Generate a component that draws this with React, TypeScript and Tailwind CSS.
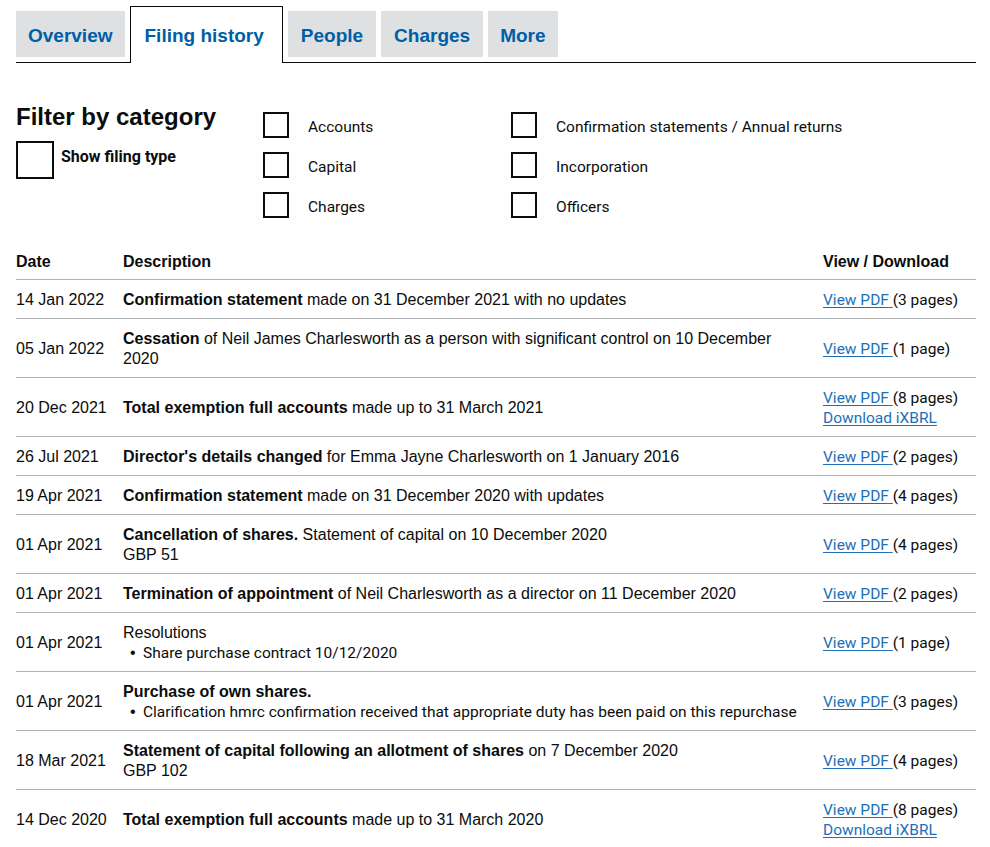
import React from "react";

const ARIAL = { fontFamily: '"Liberation Sans", Arial, sans-serif' };
const GDS = { fontFamily: 'Roboto, "Liberation Sans", sans-serif' };

type Row = {
  date: string;
  desc: React.ReactNode;
  pages: string;
  ixbrl?: boolean;
};

const Bullet = ({ children }: { children: React.ReactNode }) => (
  <div className="flex whitespace-nowrap text-[15.5px] leading-5" style={GDS}>
    <span className="w-5 pl-[7px] text-[16px]" style={ARIAL}>
      •
    </span>
    <span>{children}</span>
  </div>
);

const rows: Row[] = [
  {
    date: "14 Jan 2022",
    desc: (
      <>
        <b>Confirmation statement</b> made on 31 December 2021 with no updates
      </>
    ),
    pages: "(3 pages)",
  },
  {
    date: "05 Jan 2022",
    desc: (
      <>
        <b>Cessation</b> of Neil James Charlesworth as a person with significant control on 10 December
        <br />
        2020
      </>
    ),
    pages: "(1 page)",
  },
  {
    date: "20 Dec 2021",
    desc: (
      <>
        <b>Total exemption full accounts</b> made up to 31 March 2021
      </>
    ),
    pages: "(8 pages)",
    ixbrl: true,
  },
  {
    date: "26 Jul 2021",
    desc: (
      <>
        <b>Director's details changed</b> for Emma Jayne Charlesworth on 1 January 2016
      </>
    ),
    pages: "(2 pages)",
  },
  {
    date: "19 Apr 2021",
    desc: (
      <>
        <b>Confirmation statement</b> made on 31 December 2020 with updates
      </>
    ),
    pages: "(4 pages)",
  },
  {
    date: "01 Apr 2021",
    desc: (
      <>
        <b>Cancellation of shares.</b> Statement of capital on 10 December 2020
        <br />
        GBP 51
      </>
    ),
    pages: "(4 pages)",
  },
  {
    date: "01 Apr 2021",
    desc: (
      <>
        <b>Termination of appointment</b> of Neil Charlesworth as a director on 11 December 2020
      </>
    ),
    pages: "(2 pages)",
  },
  {
    date: "01 Apr 2021",
    desc: (
      <>
        <div>Resolutions</div>
        <Bullet>Share purchase contract 10/12/2020</Bullet>
      </>
    ),
    pages: "(1 page)",
  },
  {
    date: "01 Apr 2021",
    desc: (
      <>
        <div>
          <b>Purchase of own shares.</b>
        </div>
        <Bullet>
          Clarification hmrc confirmation received that appropriate duty has been paid on this repurchase
        </Bullet>
      </>
    ),
    pages: "(3 pages)",
  },
  {
    date: "18 Mar 2021",
    desc: (
      <>
        <b>Statement of capital following an allotment of shares</b> on 7 December 2020
        <br />
        GBP 102
      </>
    ),
    pages: "(4 pages)",
  },
  {
    date: "14 Dec 2020",
    desc: (
      <>
        <b>Total exemption full accounts</b> made up to 31 March 2020
      </>
    ),
    pages: "(8 pages)",
    ixbrl: true,
  },
];

const tabs = [
  { t: "Overview", pad: "px-3" },
  { t: "Filing history", pad: "" },
  { t: "People", pad: "px-[13px]" },
  { t: "Charges", pad: "px-[13px]" },
  { t: "More", pad: "px-3" },
];

const Box = ({ big }: { big?: boolean }) => (
  <div
    className={
      big
        ? "w-[38px] h-[38px] border-2 border-[#0b0c0c] bg-white shrink-0"
        : "w-[26px] h-[26px] border-2 border-[#0b0c0c] bg-white shrink-0"
    }
  />
);

const categories = [
  ["Accounts", "Confirmation statements / Annual returns"],
  ["Capital", "Incorporation"],
  ["Charges", "Officers"],
];

export default function App() {
  return (
    <div className="bg-white min-h-[847px] text-[#0b0c0c]" style={ARIAL}>
      <div className="ml-4 w-[960px]">
        {/* Tabs */}
        <div className="flex items-end gap-[5px] border-b border-[#0b0c0c] h-[63px]">
          {tabs.map(({ t, pad }) =>
            t === "Filing history" ? (
              <div
                key={t}
                className="h-[57px] -mb-px bg-white border border-b-0 border-[#0b0c0c] pl-[14px] pr-[18px] pt-[19px] text-[19px] leading-5 font-bold text-[#005ea5]"
              >
                {t}
              </div>
            ) : (
              <div
                key={t}
                className={`h-[46px] mb-[5px] bg-[#dee0e2] ${pad} pt-[15px] text-[19px] leading-5 font-bold text-[#005ea5]`}
              >
                {t}
              </div>
            )
          )}
        </div>

        {/* Filter */}
        <div className="flex mt-[39px]">
          <div className="w-[247px]">
            <h2 className="text-[24px] leading-[30px] font-bold">Filter by category</h2>
            <div className="flex mt-[9px] gap-[7px]">
              <Box big />
              <span className="text-[16px] leading-5 font-bold pt-[6px]" style={GDS}>
                Show filing type
              </span>
            </div>
          </div>
          <div className="pt-[10px] flex flex-col gap-[14px]">
            {categories.map((pair, i) => (
              <div key={i} className="flex">
                {pair.map((c) => (
                  <div key={c} className="w-[248px] flex items-center gap-[19px] whitespace-nowrap">
                    <Box />
                    <span className="text-[15.5px] leading-5 pt-[3px]" style={GDS}>
                      {c}
                    </span>
                  </div>
                ))}
              </div>
            ))}
          </div>
        </div>

        {/* Table */}
        <table className="mt-[25px] w-[960px] border-collapse text-[16px] leading-5">
          <thead>
            <tr className="border-b border-[#b1b4b6]">
              <th className="w-[107px] text-left font-bold pt-[9px] pb-[7px] align-middle">Date</th>
              <th className="w-[700px] text-left font-bold pt-[9px] pb-[7px] align-middle">Description</th>
              <th className="w-[153px] text-left font-bold pt-[9px] pb-[7px] align-middle">View / Download</th>
            </tr>
          </thead>
          <tbody>
            {rows.map((r, i) => (
              <tr key={i} className="border-b border-[#b1b4b6]">
                <td className="pt-[10px] pb-[8px] align-middle whitespace-nowrap">{r.date}</td>
                <td className="pt-[10px] pb-[8px] align-middle whitespace-nowrap">{r.desc}</td>
                <td className="pt-[10px] pb-[8px] align-middle whitespace-nowrap text-[15.5px]" style={GDS}>
                  <div>
                    <a href="#" className="text-[#1d70b8] underline underline-offset-2">
                      View PDF{" "}
                    </a>
                    {r.pages}
                  </div>
                  {r.ixbrl && (
                    <div>
                      <a href="#" className="text-[#1d70b8] underline underline-offset-2">
                        Download iXBRL
                      </a>
                    </div>
                  )}
                </td>
              </tr>
            ))}
          </tbody>
        </table>
      </div>
    </div>
  );
}
